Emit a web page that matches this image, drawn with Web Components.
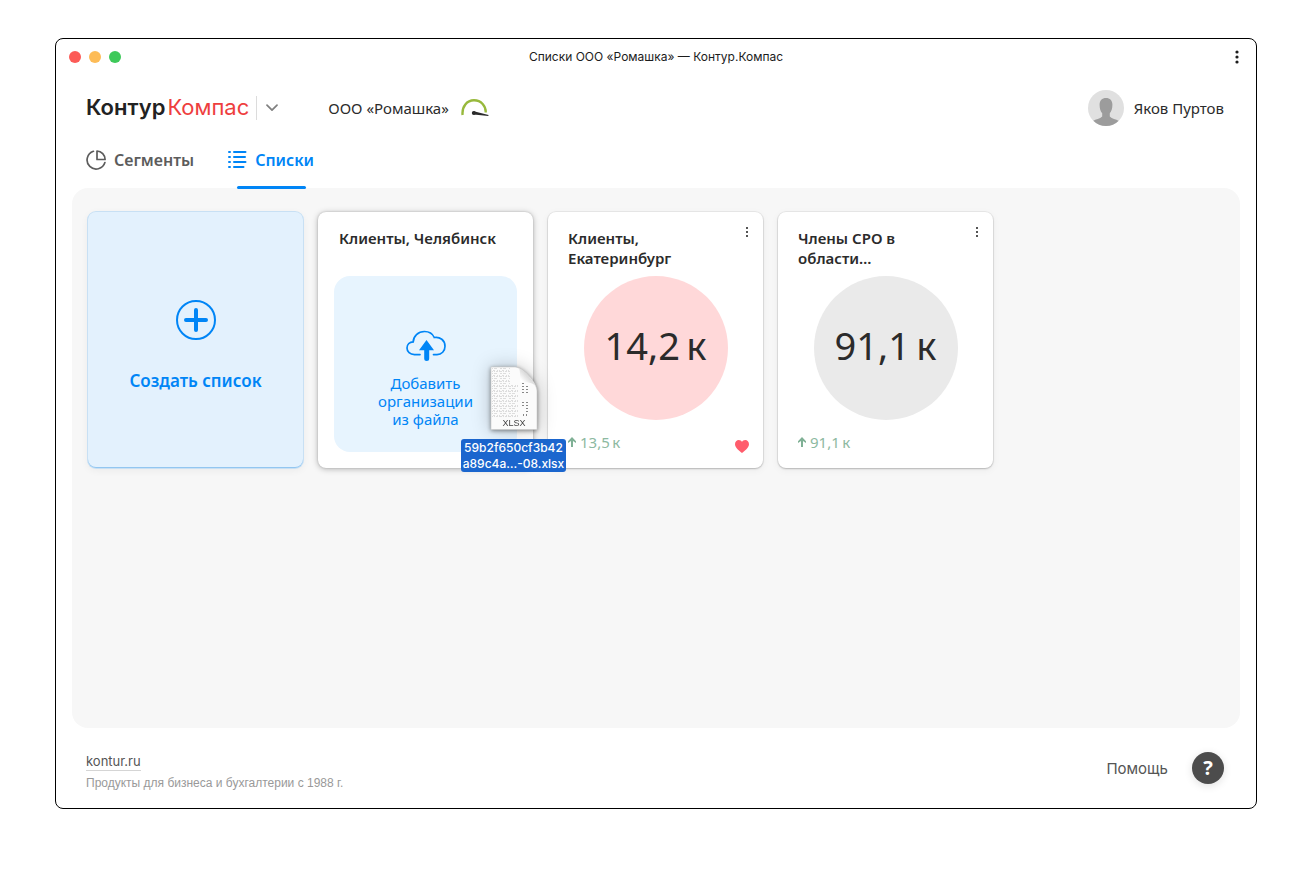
<!DOCTYPE html>
<html lang="ru">
<head>
<meta charset="utf-8">
<meta name="viewport" content="width=device-width, initial-scale=1">
<title>Списки ООО «Ромашка» — Контур.Компас</title>
<style>
  :root { --blue: #0085f6; --text: #2b2b2b; --muted: #5c5c5c; }
  *, *::before { box-sizing: border-box; }
  body {
    margin: 0; min-height: 100vh; padding: 38px 55px 73px;
    display: flex; flex-direction: column;
    background: #fff; color: var(--text);
    font: 15px/20px "Noto Sans", "Open Sans", sans-serif;
  }
  app-window { flex: 1; }
</style>
</head>
<body>
<app-window caption="Списки ООО «Ромашка» — Контур.Компас">
  <app-header organization="ООО «Ромашка»" user="Яков Пуртов"></app-header>
  <app-tabs></app-tabs>
  <list-board>
    <create-card>Создать список</create-card>
    <upload-card>
      Клиенты, Челябинск
      <dragged-file slot="drag" type="XLSX"><span>59b2f650cf3b42</span><span>a89c4a…-08.xlsx</span></dragged-file>
    </upload-card>
    <list-card total="14,2" growth="13,5" favorite>Клиенты, Екатеринбург</list-card>
    <list-card total="91,1" growth="91,1">Члены СРО в области…</list-card>
  </list-board>
  <app-footer></app-footer>
</app-window>

<script>
const RESET = `
  *, *::before, *::after { box-sizing: border-box; }
  button { margin: 0; padding: 0; border: 0; background: none; color: inherit; font: inherit; cursor: pointer; }
  a { color: inherit; text-decoration: none; }
  svg { display: block; flex: none; }
`;

class BaseElement extends HTMLElement {
  connectedCallback() {
    if (this.shadowRoot) return;
    this.attachShadow({ mode: 'open' }).innerHTML = `<style>${RESET}${this.styles()}</style>${this.render()}`;
  }
}

customElements.define('app-window', class extends BaseElement {
  styles() { return `
    :host { display: flex; flex-direction: column; border: 1px solid #000; border-radius: 8px; background: #fff; }
    .bar { display: grid; grid-template-columns: 1fr auto 1fr; align-items: center; height: 36px; padding: 0 13px; }
    .lights { display: flex; gap: 8px; }
    .lights i { width: 12px; height: 12px; border-radius: 50%; background: #fc5b57; }
    .lights i:nth-child(2) { background: #fdbc57; }
    .lights i:nth-child(3) { background: #3ec95a; }
    .title { font: 12px/16px Inter, sans-serif; color: #1c1c1c; }
    .more { justify-self: end; width: 12px; height: 20px; display: grid; place-items: center; }
  `; }
  render() { return `
    <div class="bar">
      <div class="lights"><i></i><i></i><i></i></div>
      <div class="title">${this.getAttribute('caption')}</div>
      <button class="more" aria-label="Меню окна"><svg width="4" height="14" fill="#1c1c1c"><circle cx="2" cy="2" r="1.6"/><circle cx="2" cy="7" r="1.6"/><circle cx="2" cy="12" r="1.6"/></svg></button>
    </div>
    <slot></slot>`; }
});

customElements.define('app-header', class extends BaseElement {
  styles() { return `
    :host { display: flex; align-items: center; height: 66px; padding: 0 32px 0 30px; font-size: 15px; line-height: 24px; }
    .logo { display: flex; gap: 2px; padding-bottom: 2px; font: 600 22px/28px Inter, sans-serif; color: #222; }
    .logo em { font-style: normal; font-weight: 400; color: #ee3e3e; }
    .switch { display: grid; place-items: center start; width: 24px; height: 24px; margin-left: 7px; padding-left: 8px; border-left: 1px solid #dcdcdc; }
    .org { display: flex; align-items: center; gap: 12px; margin-left: 48px; }
    .user { display: flex; align-items: center; gap: 10px; margin-left: auto; }
  `; }
  render() { return `
    <a class="logo" href="#"><span>Контур</span><em>Компас</em></a>
    <button class="switch" aria-label="Сменить продукт"><svg width="14" height="8" fill="none" stroke="#808080" stroke-width="1.7" stroke-linecap="round" stroke-linejoin="round"><path d="M2 1.200 7 6.200 12 1.200"/></svg></button>
    <button class="org">${this.getAttribute('organization')}
      <svg width="28" height="20" viewBox="0 0 28 20" fill="none"><path d="M1.600 17C.7 8.500 6 2.300 13 2.300c7.200 0 12 5.700 11.700 12.200" stroke="#98b93c" stroke-width="2.400"/><path d="M12.800 13.300 27.500 17l-.2.9-14.500-1.400z" fill="#2b2b2b"/><circle cx="12.800" cy="14.900" r="2" fill="#2b2b2b"/></svg>
    </button>
    <button class="user">
      <svg width="36" height="36" viewBox="0 0 36 36"><clipPath id="round"><circle cx="18" cy="18" r="18"/></clipPath><g clip-path="url(#round)"><path fill="#e0e0e0" d="M0 0h36v36H0z"/><path fill="#9c9c9c" d="M18 8c4 0 6.500 2.800 6.400 7 0 3.600-1 6.500-2.600 8.300v3.200c2 2.300 6.300 2.700 9 4.500V37H5v-6c2.700-1.800 7-2.200 9.200-4.500v-3.200c-1.700-1.800-2.600-4.700-2.600-8.300C11.500 10.800 14 8 18 8z"/></g></svg>
      ${this.getAttribute('user')}
    </button>`; }
});

customElements.define('app-tabs', class extends BaseElement {
  styles() { return `
    :host { display: block; }
    nav { display: flex; gap: 34px; height: 47px; padding: 0 30px; }
    a { position: relative; display: flex; align-items: center; gap: 8px; padding-bottom: 9px; color: var(--muted); font-size: 16px; line-height: 24px; font-weight: 600; }
    a[aria-current] { color: var(--blue); }
    a[aria-current]::after { content: ""; position: absolute; left: 9px; right: 8px; bottom: -1px; height: 3px; border-radius: 2px; background: var(--blue); }
  `; }
  render() { return `
    <nav>
      <a href="#segments"><svg width="20" height="20" viewBox="0 0 20 20" fill="none" stroke="#5c5c5c" stroke-width="1.700" stroke-linejoin="round" stroke-linecap="round"><path d="M7.400 1.300A9.100 9.100 0 1 0 18.900 12.600"/><path d="M11 1v8.500h8.100C19 5 15.600 1.200 11 1z"/></svg>Сегменты</a>
      <a href="#lists" aria-current="page"><svg width="19" height="18" viewBox="0 0 19 18" fill="none" stroke="#0085f6" stroke-width="2" stroke-linecap="round"><path d="M6 1h11.500M6 6h11M6 11h11.500M6 16h9.500"/><path d="M1 1h1M1 6h1M1 11h1M1 16h1"/></svg>Списки</a>
    </nav>`; }
});

customElements.define('list-board', class extends BaseElement {
  styles() { return `
    :host { flex: 1; margin: 0 16px; padding: 24px 16px; border-radius: 16px; background: #f7f7f7;
      display: grid; grid-template-columns: repeat(auto-fill, 215px); grid-auto-rows: min-content; gap: 15px; }
  `; }
  render() { return `<slot></slot>`; }
});

const CARD = `
  :host { position: relative; display: flex; flex-direction: column; min-height: 256px; border-radius: 8px; background: #fff;
    box-shadow: 0 0 0 1px rgba(0,0,0,.05), 0 1px 2px rgba(0,0,0,.2), 0 2px 8px rgba(0,0,0,.05); }
  h2 { margin: 0; height: 40px; font-size: 15px; line-height: 20px; font-weight: 600; }
`;

customElements.define('create-card', class extends BaseElement {
  styles() { return CARD + `
    :host { background: #e3f1fd; box-shadow: 0 0 0 1px #c8e0f4, 0 2px 0 0 #86bff0, 0 2px 8px rgba(0,0,0,.06); box-shadow: inset 0 -1px #93c6f0, 0 0 0 1px #c8e0f4, 0 2px 8px rgba(0,0,0,.06); }
    button { flex: 1; display: flex; flex-direction: column; align-items: center; justify-content: center; gap: 29px; padding-top: 13px;
      color: var(--blue); font-size: 17px; line-height: 24px; font-weight: 600; }
  `; }
  render() { return `
    <button>
      <svg width="40" height="40" fill="none" stroke="#0085f6" stroke-linecap="round"><circle cx="20" cy="20" r="19" stroke-width="2"/><path d="M10 20h20M20 10v20" stroke-width="4"/></svg>
      <slot></slot>
    </button>`; }
});

customElements.define('upload-card', class extends BaseElement {
  styles() { return CARD + `
    :host { padding: 16px; z-index: 1; box-shadow: 0 0 2px rgba(0,0,0,.2), 0 1px 6px rgba(0,0,0,.28); }
    h2 { margin: 0 5px 8px; }
    .drop { flex: 1; display: flex; flex-direction: column; align-items: center; padding: 54px 30px 0; border-radius: 16px; background: #e7f4fe; color: var(--blue); line-height: 18px; }
    .drop span { width: 110px; margin-top: 12px; }
  `; }
  render() { return `
    <h2><slot></slot></h2>
    <button class="drop">
      <svg width="40" height="32" viewBox="0 0 40 32"><path d="M14 24.600H8.500C4 24.600 1 21.700 1 18c0-3.500 2.700-6 6.200-6.100.2-5.700 4.800-10.400 11.300-10.400 4.700 0 8.200 2.500 9.800 6 5.700-1 10.700 2.800 10.700 8.700 0 5-3.500 8.400-8 8.400h-3.500" fill="none" stroke="#0085f6" stroke-width="1.700" stroke-linecap="round"/><path d="M20.500 10 28 20.200h-4.800v8.300a2.500 2.500 0 0 1-5 0v-8.300H13z" fill="#0085f6"/></svg>
      <span>Добавить организации из файла</span>
    </button>
    <slot name="drag"></slot>`; }
});

customElements.define('list-card', class extends BaseElement {
  styles() { return CARD + `
    :host { padding: 16px 20px 14px; }
    h2 { margin: 0 20px 8px 0; }
    .more { position: absolute; top: 10px; right: 6px; width: 20px; height: 20px; display: grid; place-items: center; }
    .total { display: grid; place-items: center; align-self: center; width: 144px; height: 144px; padding-bottom: 6px; border-radius: 50%; background: #eaeaea; font-size: 38px; line-height: 48px; }
    :host([favorite]) .total { background: #ffd8d9; }
    .row { display: flex; align-items: center; justify-content: space-between; height: 24px; margin-top: auto; }
    .growth { display: flex; align-items: center; gap: 4px; color: #8db9a1; line-height: 20px; }
    .heart { margin: 9px -6px 0 0; }
  `; }
  render() { return `
    <h2><slot></slot></h2>
    <button class="more" aria-label="Действия"><svg width="2" height="10" fill="#555"><path d="M0 0h2v2H0zM0 4h2v2H0zM0 8h2v2H0z"/></svg></button>
    <div class="total"><span>${this.getAttribute('total')}&#8198;к</span></div>
    <div class="row">
      <span class="growth"><svg width="8" height="10" viewBox="0 0 8 10" fill="#7fb095"><path d="M4 0 8 4.300V6L5 4V10H3V4L0 6V4.300z"/></svg><span>${this.getAttribute('growth')}&#8198;к</span></span>
      ${this.hasAttribute('favorite') ? `<button class="heart" aria-label="Избранное"><svg width="14" height="13" viewBox="0 0 14 13" fill="#ff5c6c"><path d="M7 13C4.500 11 0 7.800 0 4.200 0 1.700 1.700 0 3.800 0 5.200 0 6.400.7 7 1.900 7.600.7 8.800 0 10.200 0 12.300 0 14 1.700 14 4.200 14 7.800 9.500 11 7 13z"/></svg></button>` : ''}
    </div>`; }
});

customElements.define('dragged-file', class extends BaseElement {
  styles() { return `
    :host { position: absolute; left: 143px; top: 154px; width: 105px; display: flex; flex-direction: column; align-items: center; gap: 9px; }
    .icon { filter: drop-shadow(0 1px 2px rgba(0,0,0,.45)) drop-shadow(0 0 9px rgba(0,0,0,.22)); }
    .icon text { font: 9px "Liberation Sans", sans-serif; }
    .name { display: flex; flex-direction: column; align-items: center; width: 105px; border-radius: 3px; background: #1b66ce; color: #fff; font: 500 12px/16px Inter, sans-serif; padding-top: 1px; white-space: nowrap; }
  `; }
  render() { return `
    <svg class="icon" width="48" height="64" viewBox="0 0 48 64">
      <defs>
        <linearGradient id="fold" x1="0" y1="1" x2="1" y2="0"><stop offset=".25" stop-color="#fff"/><stop offset=".6" stop-color="#d4d4d4"/></linearGradient>
        <pattern id="cells" width="9" height="5" patternUnits="userSpaceOnUse"><path d="M0 .5h3M4 .5h1M6 .5h2M1 2.500h2M4 2.500h3M0 4.500h1M3 4.500h2M7 4.500h1" stroke="#d6d6d6" stroke-width=".8"/></pattern>
      </defs>
      <path d="M1 1h24c7 0 22 15 22 24v38.500H1z" fill="#fbfbfb" stroke="#c9c9c9" stroke-width=".6"/>
      <path d="M2 2h18v16h8v34H2z" fill="url(#cells)"/>
      <path d="M33 17v11M37 20v9M33 36v6M37 36v11M33 49h4" stroke="#888" stroke-width="2" stroke-dasharray="1 2"/>
      <path d="M29 2c1 3 1.500 8 1 14 6 0 13 0 16 5C43 14 35 5 29 2z" fill="url(#fold)"/>
      <text x="24" y="60" text-anchor="middle" fill="#444">${this.getAttribute('type')}</text>
    </svg>
    <div class="name"><slot></slot></div>`; }
});

customElements.define('app-footer', class extends BaseElement {
  styles() { return `
    :host { display: flex; align-items: center; justify-content: space-between; height: 80px; padding: 0 32px 0 30px; }
    .about { display: flex; flex-direction: column; align-items: flex-start; gap: 4px; padding-top: 8px; font: 12px/16px "Liberation Sans", sans-serif; color: #999; }
    .about a { font: 13px/17px Inter, sans-serif; color: #555; border-bottom: 1px solid #d5d5d5; }
    .help { display: flex; align-items: center; gap: 24px; font: 15px/20px Inter, sans-serif; color: #555; }
    .label { padding-top: 2px; }
    .mark { width: 32px; height: 32px; border-radius: 50%; background: #4c4c4c; color: #fff; font: 700 20px/32px "Noto Sans", sans-serif; text-align: center; box-shadow: 0 2px 8px rgba(0,0,0,.12); }
  `; }
  render() { return `
    <div class="about"><a href="#kontur">kontur.ru</a><span>Продукты для бизнеса и бухгалтерии с 1988 г.</span></div>
    <button class="help"><span class="label">Помощь</span><span class="mark">?</span></button>`; }
});
</script>
</body>
</html>
